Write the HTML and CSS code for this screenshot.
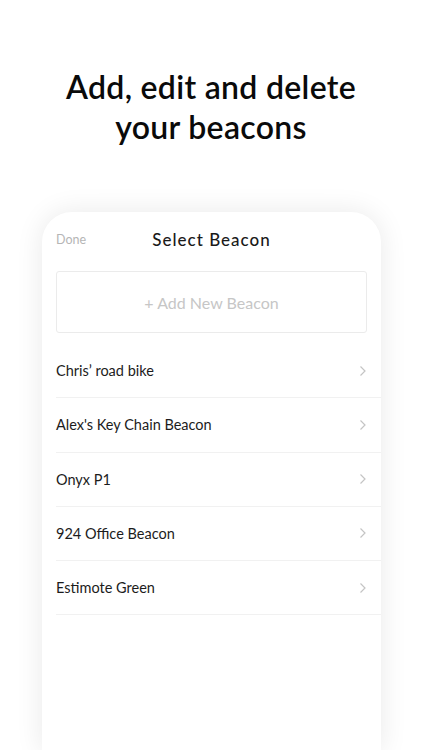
FILE: index.html
```html
<!DOCTYPE html>
<html>
<head>
<meta charset="utf-8">
<link rel="stylesheet" href="styles.css">
</head>
<body>
<h1 class="headline">Add, edit and delete<br>your beacons</h1>
<div class="card">
  <div class="nav">
    <span class="done">Done</span>
    <span class="title">Select Beacon</span>
  </div>
  <div class="add">+ Add New Beacon</div>
  <ul class="list">
    <li class="row"><span>Chris’ road bike</span><svg class="chev" viewBox="0 0 8 12"><path d="M1.5 1.5 L6 6 L1.5 10.5" /></svg></li>
    <li class="row"><span>Alex's Key Chain Beacon</span><svg class="chev" viewBox="0 0 8 12"><path d="M1.5 1.5 L6 6 L1.5 10.5" /></svg></li>
    <li class="row"><span>Onyx P1</span><svg class="chev" viewBox="0 0 8 12"><path d="M1.5 1.5 L6 6 L1.5 10.5" /></svg></li>
    <li class="row"><span>924 Office Beacon</span><svg class="chev" viewBox="0 0 8 12"><path d="M1.5 1.5 L6 6 L1.5 10.5" /></svg></li>
    <li class="row"><span>Estimote Green</span><svg class="chev" viewBox="0 0 8 12"><path d="M1.5 1.5 L6 6 L1.5 10.5" /></svg></li>
  </ul>
</div>
</body>
</html>
```
FILE: styles.css
```css
html, body {
  margin: 0;
  padding: 0;
  background: #ffffff;
  width: 422px;
  height: 750px;
  overflow: hidden;
  font-family: "Lato", "Open Sans", sans-serif;
  color: #111;
}
.headline {
  margin: 0;
  padding-top: 67px;
  text-align: center;
  font-size: 32px;
  line-height: 40px;
  font-weight: 600;
  letter-spacing: 0.3px;
  color: #0a0a0a;
}
.card {
  margin: 65px 41px 0 42px;
  height: 540px;
  background: #fff;
  border-radius: 30px 30px 0 0;
  box-shadow: 0 0 28px rgba(0, 0, 0, 0.09);
  padding: 0 0 0 14px;
}
.nav {
  position: relative;
  height: 59px;
  display: flex;
  align-items: flex-start;
  justify-content: center;
  padding-right: 14px;
}
.done {
  position: absolute;
  left: 0;
  top: 20px;
  font-size: 12.5px;
  color: #b5b5b5;
}
.title {
  font-size: 17px;
  font-weight: 500;
  letter-spacing: 1px;
  color: #1a1a1a;
  margin-top: 17px;
}
.add {
  margin-right: 14px;
  height: 60px;
  border: 1px solid #ebebeb;
  border-radius: 3px;
  display: flex;
  align-items: center;
  justify-content: center;
  font-size: 16px;
  color: #c6c6c6;
}
.list {
  list-style: none;
  margin: 11px 0 0 0;
  padding: 0;
}
.row {
  height: 53.25px;
  border-bottom: 1px solid #f1f1f1;
  display: flex;
  align-items: center;
  justify-content: space-between;
  padding-right: 14px;
  font-size: 14.5px;
  color: #1c1c1c;
}
.chev {
  width: 8px;
  height: 12px;
  fill: none;
  stroke: #c4c4c4;
  stroke-width: 1.2;
}
```
